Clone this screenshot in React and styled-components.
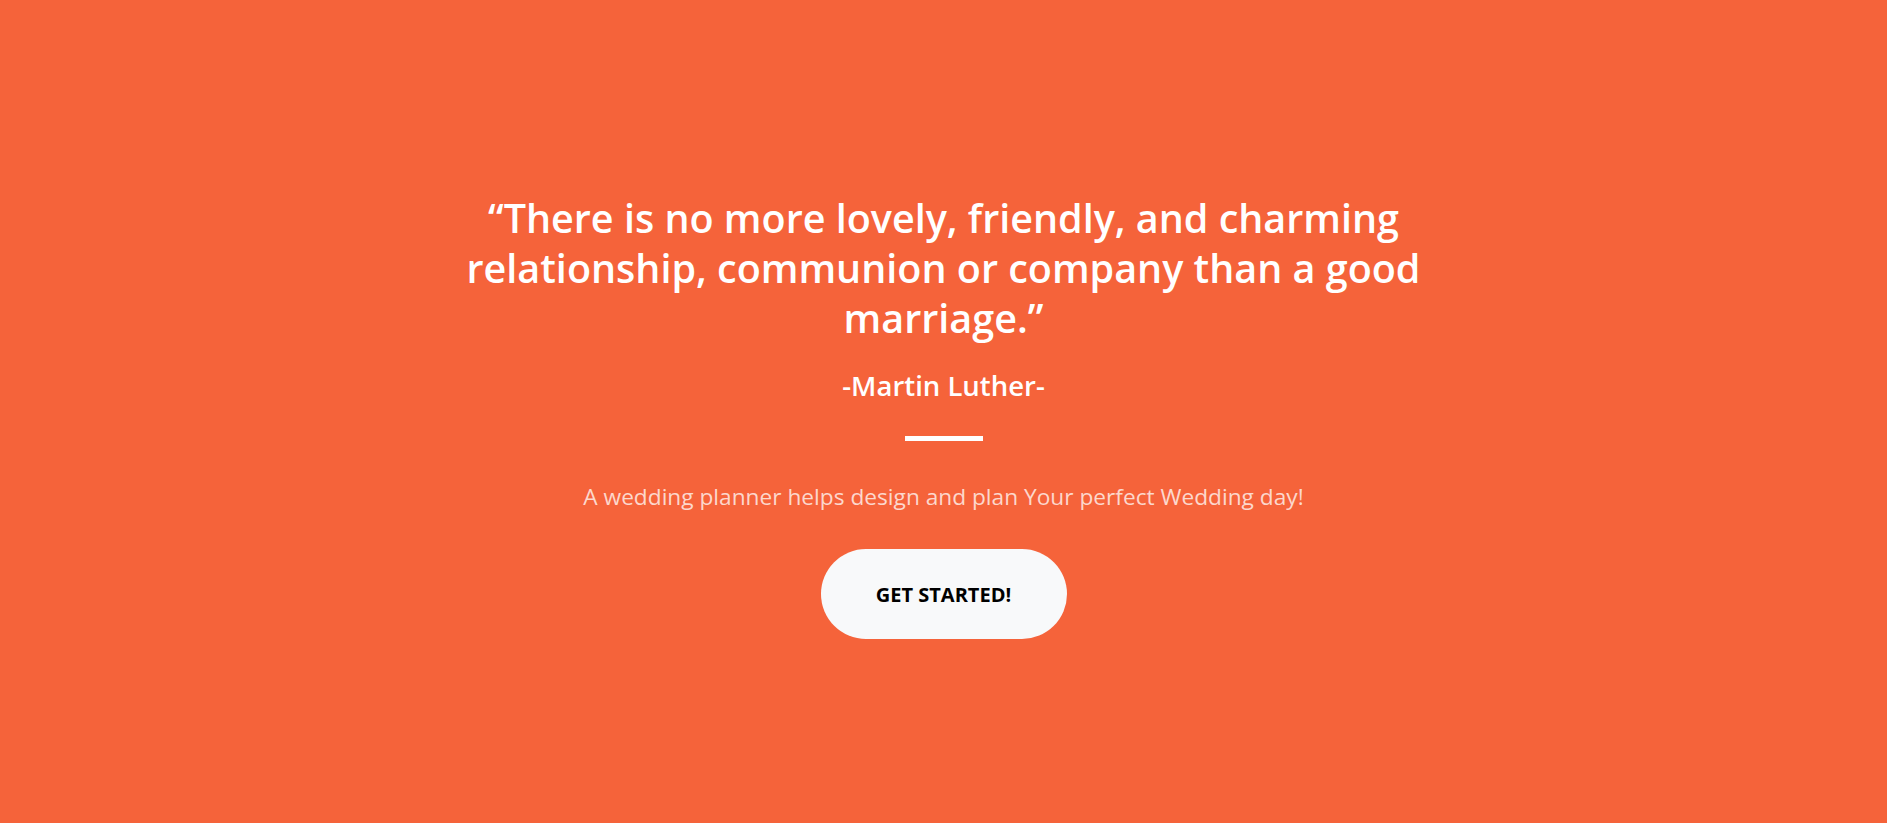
import React from 'react'
import styled, { createGlobalStyle } from 'styled-components'

const GlobalStyle = createGlobalStyle`
  html, body {
    margin: 0;
    padding: 0;
  }
  body {
    font-family: "Open Sans", "Noto Sans", sans-serif;
    background: #f5633a;
  }
`

const Masthead = styled.header`
  min-height: 823px;
  box-sizing: border-box;
  background: #f5633a;
  display: flex;
  flex-direction: column;
  align-items: center;
  padding-top: 193px;
  text-align: center;
`

const Quote = styled.h1`
  margin: 0;
  max-width: 1000px;
  font-size: 39.5px;
  line-height: 50px;
  font-weight: 600;
  color: #fff;
`

const Author = styled.h3`
  margin: 28px 0 0;
  font-size: 27.5px;
  line-height: 30px;
  font-weight: 600;
  color: #fff;
`

const Divider = styled.hr`
  width: 78px;
  height: 5px;
  margin: 35px 0 0;
  border: 0;
  background: #fff;
`

const Lead = styled.p`
  margin: 41px 0 0;
  font-size: 22.7px;
  line-height: 30px;
  font-weight: 400;
  color: rgba(255, 255, 255, 0.75);
`

const StartButton = styled.a`
  margin-top: 37px;
  width: 246px;
  height: 90px;
  border-radius: 45px;
  background: #f8f9fa;
  color: #000;
  display: flex;
  align-items: center;
  justify-content: center;
  font-size: 20px;
  font-weight: 700;
  text-transform: uppercase;
  text-decoration: none;
  cursor: pointer;
`

const App = () => {
  return (
    <>
      <GlobalStyle />
      <Masthead>
        <Quote>
          “There is no more lovely, friendly, and charming relationship, communion or company than a good marriage.”
        </Quote>
        <Author>-Martin Luther-</Author>
        <Divider />
        <Lead>A wedding planner helps design and plan Your perfect Wedding day!</Lead>
        <StartButton href="#about">Get Started!</StartButton>
      </Masthead>
    </>
  )
}

export default App
